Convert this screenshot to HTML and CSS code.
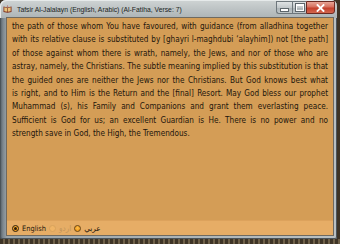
FILE: index.html
```html
<!DOCTYPE html>
<html>
<head>
<meta charset="utf-8">
<link rel="stylesheet" href="styles.css">
</head>
<body>
<div class="window">
  <div class="titlebar">
    <svg class="appicon" width="9" height="8" viewBox="0 0 9 8">
      <path d="M0.5 1.5 L4.5 2.5 L8.5 1.5 L8.5 7 L4.5 7.8 L0.5 7 Z" fill="#7a2a1a"/>
      <path d="M1.3 2.3 L4.2 3 L4.2 6.8 L1.3 6.2 Z" fill="#e8c27a"/>
      <path d="M7.7 2.3 L4.8 3 L4.8 6.8 L7.7 6.2 Z" fill="#e8c27a"/>
      <path d="M4.5 0.3 L5.3 1.6 L3.7 1.6 Z" fill="#b8452a"/>
    </svg>
    <span class="title">Tafsir Al-Jalalayn (English, Arabic) (Al-Fatiha, Verse: 7)</span>
    <div class="caption">
      <div class="cbtn cmin"><span class="minbar"></span></div>
      <div class="cbtn cmax"><span class="maxbox"></span></div>
      <div class="cbtn cclose">
        <svg width="9" height="8" viewBox="0 0 9 8"><path d="M1.5 1 L7.5 7 M7.5 1 L1.5 7" stroke="#fff" stroke-width="1.8" stroke-linecap="square"/></svg>
      </div>
    </div>
  </div>
  <div class="client">
    <div class="content">
      <p class="tafsir">
        <span class="ln">the path of those whom You have favoured, with guidance (from alladhina together</span>
        <span class="ln">with its relative clause is substituted by [ghayri l-maghdubi ‘alayhim]) not [the path]</span>
        <span class="ln">of those against whom there is wrath, namely, the Jews, and nor of those who are</span>
        <span class="ln">astray, namely, the Christians. The subtle meaning implied by this substitution is that</span>
        <span class="ln">the guided ones are neither the Jews nor the Christians. But God knows best what</span>
        <span class="ln">is right, and to Him is the Return and the [final] Resort. May God bless our prophet</span>
        <span class="ln">Muhammad (s), his Family and Companions and grant them everlasting peace.</span>
        <span class="ln">Sufficient is God for us; an excellent Guardian is He. There is no power and no</span>
        <span class="ln last">strength save in God, the High, the Tremendous.</span>
      </p>
    </div>
    <div class="langbar">
      <label class="opt"><span class="radio checked"></span><span class="lbl">English</span></label>
      <label class="opt"><span class="radio disabled"></span><span class="lbl dim" lang="ur">اردو</span></label>
      <label class="opt"><span class="radio"></span><span class="lbl" lang="ar">عربي</span></label>
    </div>
  </div>
</div>
<div class="backdrop"></div>
</body>
</html>
```

FILE: styles.css
```css
html, body {
  margin: 0;
  padding: 0;
}
body {
  width: 340px;
  height: 244px;
  overflow: hidden;
  background: #3e3426;
  font-family: "Liberation Sans", Arial, sans-serif;
}
.window {
  box-sizing: border-box;
  width: 337px;
  height: 239px;
  padding: 0 4px 4px 7px;
  border-radius: 6px 6px 2px 2px;
  background: linear-gradient(to right, #4f5a63 0, #7d878e 3px, #9aa3a8 7px, #aeb6b9 60%, #b9c0c2 100%);
  box-shadow: inset 0 0 0 1px #4b545a;
  display: flex;
  flex-direction: column;
}
.titlebar {
  height: 18px;
  display: flex;
  align-items: flex-start;
  margin-left: -7px;
  margin-right: -4px;
  padding-left: 3px;
  border-radius: 6px 6px 0 0;
  background: linear-gradient(to bottom, #cfd4d4 0, #bfc5c6 8px, #adb4b6 18px);
  box-shadow: inset 1px 1px 0 #e6eaea;
}
.appicon {
  margin-top: 5px;
  flex: none;
}
.title {
  margin-left: 5px;
  margin-top: 6px;
  font-size: 6.8px;
  line-height: 8px;
  color: #1b1f22;
  white-space: nowrap;
  flex: 1;
}
.caption {
  display: flex;
  margin-top: 1px;
  margin-right: 2px;
  height: 13px;
}
.cbtn {
  height: 13px;
  box-sizing: border-box;
  border: 1px solid #6e777c;
  display: flex;
  align-items: center;
  justify-content: center;
}
.cmin {
  width: 16px;
  border-right: none;
  border-radius: 0 0 0 3px;
  background: linear-gradient(to bottom, #dfe3e4 0, #c3c9cb 50%, #aab2b5 51%, #bfc6c8 100%);
}
.cmax {
  width: 14px;
  border-right: none;
  background: linear-gradient(to bottom, #dfe3e4 0, #c3c9cb 50%, #aab2b5 51%, #bfc6c8 100%);
}
.cclose {
  width: 29px;
  border-color: #6b2a22;
  border-radius: 0 0 3px 0;
  background: linear-gradient(to bottom, #e7a596 0, #d6705e 45%, #c4402c 55%, #d2674e 100%);
}
.minbar {
  width: 7px;
  height: 2px;
  margin-top: 4px;
  background: #fff;
  box-shadow: 0 0 0 1px #5d666b;
}
.maxbox {
  width: 6px;
  height: 4px;
  border: 1px solid #fff;
  border-top-width: 2px;
  box-shadow: 0 0 0 1px #5d666b;
}
.client {
  flex: 1;
  display: flex;
  flex-direction: column;
  background: #d49d56;
  box-shadow: 0 0 0 1px #6f6a60;
}
.content {
  flex: 1;
  padding: 2px 5px 0 5px;
}
.tafsir {
  margin: 0;
  font-family: "DejaVu Sans Condensed", "DejaVu Sans", sans-serif;
  font-stretch: condensed;
  font-size: 8.15px;
  line-height: 13.4px;
  color: #1c150c;
}
.ln {
  display: block;
  white-space: nowrap;
  text-align: justify;
  text-align-last: justify;
}
.ln.last {
  text-align-last: left;
}
.langbar {
  height: 15px;
  display: flex;
  align-items: center;
  padding-left: 5px;
  background: #e6ad66;
  border-top: 1px solid #dca25c;
  box-sizing: border-box;
}
.opt {
  display: flex;
  align-items: center;
  margin-right: 3px;
}
.radio {
  width: 7px;
  height: 7px;
  box-sizing: border-box;
  border-radius: 50%;
  border: 1px solid #6a4614;
  background: radial-gradient(circle at 50% 40%, #ffc24d 0, #f29a1c 70%);
  display: flex;
  align-items: center;
  justify-content: center;
}
.radio.checked {
  border-color: #2c1e0a;
}
.radio.checked::after {
  content: "";
  width: 3px;
  height: 3px;
  border-radius: 50%;
  background: #2a1a06;
}
.radio.disabled {
  border-color: #d8a35c;
  background: #efb466;
}
.lbl {
  margin-left: 3px;
  font-family: "DejaVu Sans Condensed", "DejaVu Sans", sans-serif;
  font-stretch: condensed;
  font-size: 7.4px;
  line-height: 9px;
  color: #1d150b;
}
.lbl[lang] {
  font-family: "DejaVu Sans", sans-serif;
  font-size: 8px;
}
.lbl.dim {
  color: #c3955a;
}
.backdrop {
  height: 5px;
  background: repeating-linear-gradient(to right, #3e3426 0, #3e3426 3px, #6e6048 3px, #6e6048 5px);
}
```
